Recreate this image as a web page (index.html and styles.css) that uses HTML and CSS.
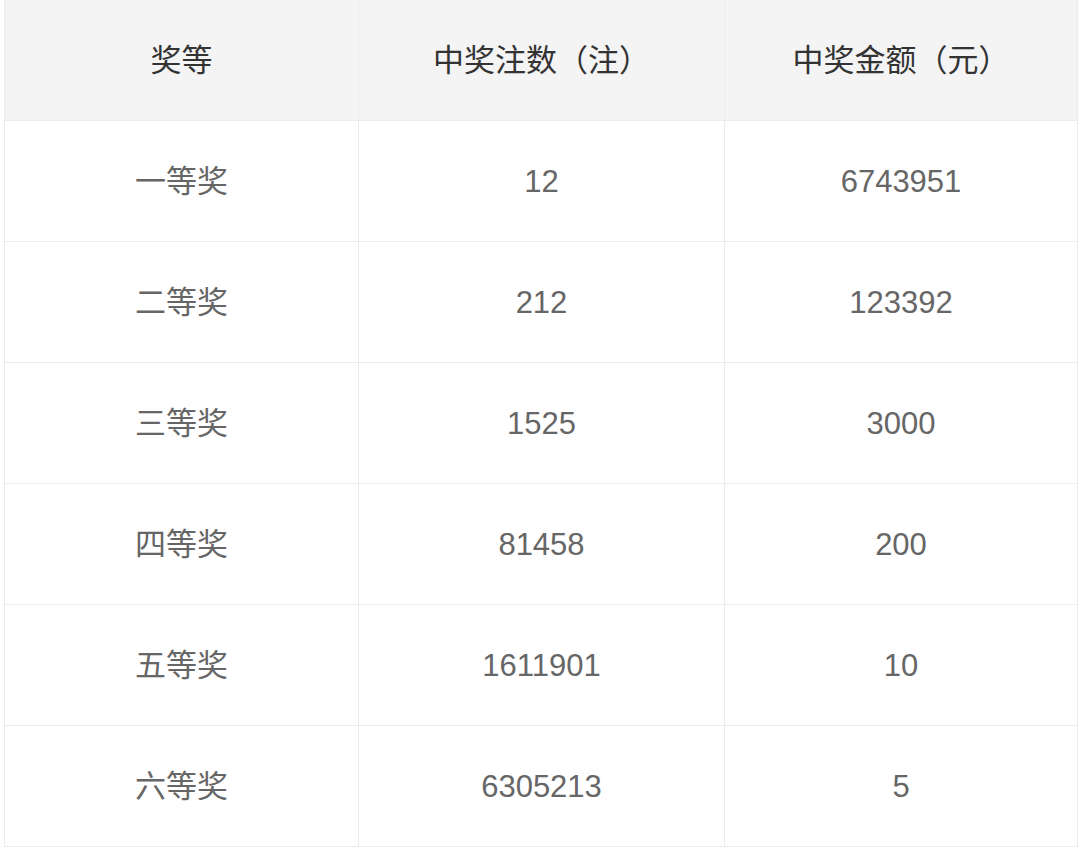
FILE: index.html
```html
<!DOCTYPE html>
<html lang="zh-CN">
<head>
<meta charset="utf-8">
<title>中奖情况</title>
<link rel="stylesheet" href="styles.css">
</head>
<body>
<table class="prize-table">
  <thead>
    <tr>
      <th class="col-a">奖等</th>
      <th class="col-b">中奖注数（注）</th>
      <th class="col-c">中奖金额（元）</th>
    </tr>
  </thead>
  <tbody>
    <tr><td>一等奖</td><td>12</td><td>6743951</td></tr>
    <tr><td>二等奖</td><td>212</td><td>123392</td></tr>
    <tr><td>三等奖</td><td>1525</td><td>3000</td></tr>
    <tr><td>四等奖</td><td>81458</td><td>200</td></tr>
    <tr><td>五等奖</td><td>1611901</td><td>10</td></tr>
    <tr><td>六等奖</td><td>6305213</td><td>5</td></tr>
  </tbody>
</table>
</body>
</html>
```
FILE: styles.css
```css
html, body {
  margin: 0;
  padding: 0;
  background: #ffffff;
}
body {
  padding-left: 4px;
  font-family: "Liberation Sans", "Noto Sans CJK SC", sans-serif;
}
.prize-table {
  border-collapse: collapse;
  table-layout: fixed;
  width: 1071px;
  margin-top: -1px;
}
.prize-table th,
.prize-table td {
  border: 1px solid #ebebeb;
  text-align: center;
  vertical-align: middle;
  font-size: 31px;
  line-height: 1;
  padding: 0;
  height: 120px;
}
.prize-table th {
  background: #f4f4f4;
  color: #333333;
  font-weight: normal;
}
.prize-table td {
  color: #666666;
}
.col-a { width: 353px; }
.col-b { width: 365px; }
.col-c { width: 352px; }
```
